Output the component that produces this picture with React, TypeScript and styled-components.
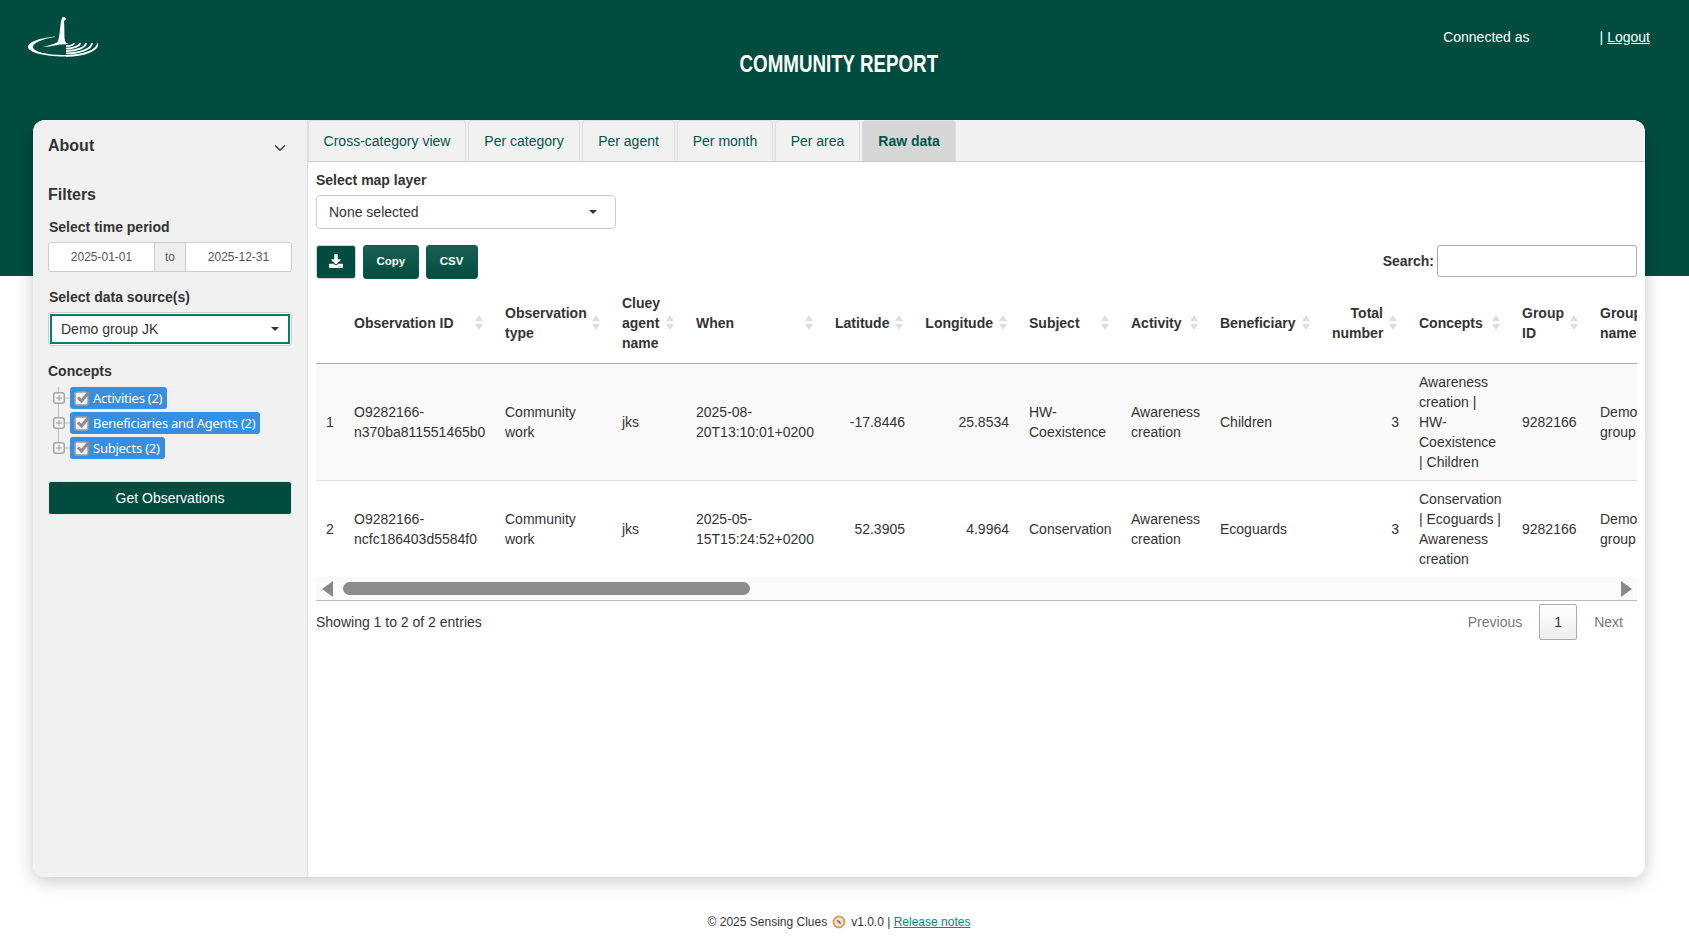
import React from "react";
import styled, { createGlobalStyle } from "styled-components";
import { ChevronDown } from "lucide-react";
import { FaDownload } from "react-icons/fa";

const GREEN = "#004d40";

const Global = createGlobalStyle`
  html, body { margin: 0; padding: 0; background: #fff; }
  body { font-family: "Liberation Sans", Arial, sans-serif; font-size: 14px; color: #333; line-height: 20px; overflow: hidden; }
  * { box-sizing: border-box; }
`;

const Top = styled.header`
  height: 276px;
  background: ${GREEN};
  padding: 17px 39px 0 28px;
  display: grid;
  grid-template-columns: 1fr auto 1fr;
  align-items: start;
  color: #fff;
`;
const Logo = styled.svg`
  width: 70px;
  height: 40px;
  display: block;
`;
const Title = styled.h1`
  margin: 34px 0 0;
  font-size: 23px;
  line-height: 26px;
  font-weight: 700;
  white-space: nowrap;
  transform: scaleX(0.815);
`;
const User = styled.div`
  margin-top: 10px;
  justify-self: end;
  display: flex;
  gap: 4px;
`;
const Who = styled.span`
  margin-right: 66px;
`;
const Logout = styled.a`
  color: #fff;
  text-decoration: underline;
`;

const Card = styled.main`
  display: flex;
  height: 757px;
  margin: -156px 44px 0 33px;
  background: #fff;
  border-radius: 12px;
  box-shadow: 0 4px 18px rgba(0, 0, 0, 0.22);
  overflow: hidden;
`;

const Side = styled.aside`
  width: 275px;
  flex: none;
  background: #f1f1f1;
  border-right: 1px solid #ddd;
  padding: 16px 15px 0 15px;
  display: flex;
  flex-direction: column;
`;
const SideHead = styled.div`
  display: flex;
  justify-content: space-between;
  align-items: center;
  font-size: 16px;
  font-weight: 700;
  height: 20px;
  color: #333;
  svg { margin: 3px 3px 0 0; color: #444; }
`;
const FilterTitle = styled.div`
  font-size: 16px;
  font-weight: 700;
  margin-top: 29px;
  height: 20px;
`;
const FieldLabel = styled.label<{ $top: number; $bottom?: number; $indent?: boolean }>`
  display: block;
  font-weight: 700;
  height: 20px;
  margin: ${(p) => p.$top}px 0 ${(p) => p.$bottom ?? 5}px;
  padding-left: ${(p) => (p.$indent ? 1 : 0)}px;
`;
const DateRange = styled.div`
  display: flex;
  width: 244px;
  height: 30px;
  border: 1px solid #ccc;
  border-radius: 3px;
  background: #fff;
  font-size: 12px;
  color: #555;
`;
const DateCell = styled.div`
  flex: 1;
  display: flex;
  align-items: center;
  justify-content: center;
`;
const DateTo = styled.div`
  width: 32px;
  display: flex;
  align-items: center;
  justify-content: center;
  background: #eee;
  border-left: 1px solid #ccc;
  border-right: 1px solid #ccc;
`;
const SourceFrame = styled.div`
  width: 244px;
  height: 34px;
  padding: 1px;
  border: 1px solid #ccc;
  border-radius: 4px;
  background: #fff;
`;
const SourceInner = styled.div`
  height: 100%;
  border: 2px solid #00806f;
  background: #fff;
  padding-left: 9px;
  padding-right: 9px;
  display: flex;
  align-items: center;
  justify-content: space-between;
`;
const Caret = styled.span`
  width: 0;
  height: 0;
  border-left: 4.5px solid transparent;
  border-right: 4.5px solid transparent;
  border-top: 4.5px solid #333;
`;
const Tree = styled.ul`
  list-style: none;
  margin: 0;
  padding: 0 0 0 5px;
  display: flex;
  flex-direction: column;
  gap: 3px;
  background: linear-gradient(#bbb, #bbb) 10px 0 / 1px 64px no-repeat;
`;
const TreeRow = styled.li`
  display: flex;
  align-items: center;
  height: 22px;
`;
const Expander = styled.svg`
  width: 17px;
  height: 12px;
  flex: none;
`;
const Node = styled.span`
  display: inline-flex;
  align-items: center;
  gap: 2px;
  height: 22px;
  padding: 0 5px 0 4px;
  background: #378fe2;
  border-radius: 3px;
  color: #fff;
  font-family: "Noto Sans", sans-serif;
  font-size: 13px;
  letter-spacing: -0.25px;
  white-space: nowrap;
`;
const Check = styled.svg`
  width: 17px;
  height: 17px;
  flex: none;
  margin-top: -2px;
`;
const GetButton = styled.button`
  width: 244px;
  height: 34px;
  margin-top: 22px;
  border: 1px solid #e8e8e8;
  border-radius: 3px;
  background: ${GREEN};
  color: #fff;
  font: 14px "Liberation Sans", Arial, sans-serif;
`;

const Content = styled.section`
  flex: 1;
  min-width: 0;
  display: flex;
  flex-direction: column;
`;
const TabBar = styled.nav`
  display: flex;
  gap: 2px;
  height: 42px;
  flex: none;
  background: #f1f1f1;
  border-bottom: 1px solid #ccc;
`;
const Tab = styled.a<{ $w: number; $on?: boolean }>`
  width: ${(p) => p.$w}px;
  height: 41px;
  display: flex;
  align-items: center;
  justify-content: center;
  border: 1px solid #ddd;
  border-bottom: 0;
  border-radius: 4px 4px 0 0;
  color: #00574a;
  background: ${(p) => (p.$on ? "#d6d6d6" : "#f1f1f1")};
  font-weight: ${(p) => (p.$on ? 700 : 400)};
`;
const Panel = styled.div`
  padding: 8px 8px 0 8px;
  flex: 1;
  min-height: 0;
`;
const MapLabel = styled.label`
  display: block;
  font-weight: 700;
  height: 20px;
  margin-bottom: 5px;
`;
const LayerSelect = styled.div`
  width: 300px;
  height: 34px;
  display: flex;
  align-items: center;
  justify-content: space-between;
  padding: 0 18px 0 12px;
  border: 1px solid #ccc;
  border-radius: 4px;
  background: #fff;
`;
const Toolbar = styled.div`
  display: flex;
  align-items: center;
  margin-top: 16px;
  height: 34px;
`;
const ToolButton = styled.button<{ $w: number; $icon?: boolean }>`
  width: ${(p) => p.$w}px;
  height: 34px;
  margin-right: 7px;
  display: flex;
  align-items: center;
  justify-content: center;
  padding: 0 0 2px;
  border: 1px solid ${(p) => (p.$icon ? "#d0d0d0" : "#0d5a4d")};
  border-radius: 3px;
  background: ${(p) => (p.$icon ? GREEN : "linear-gradient(#1a6052, #004d40)")};
  color: #fff;
  font: 700 11.5px "Liberation Sans", Arial, sans-serif;
`;
const SearchLabel = styled.label`
  margin-left: auto;
  font-weight: 700;
  margin-right: 3px;
  margin-top: -2px;
`;
const SearchBox = styled.div`
  width: 200px;
  height: 32px;
  margin-bottom: 2px;
  border: 1px solid #aaa;
  border-radius: 3px;
  background: #fff;
`;

const TableClip = styled.div`
  margin-top: 4px;
  overflow: hidden;
`;
const Table = styled.table`
  table-layout: fixed;
  border-collapse: collapse;
  width: 1441px;
`;
const Th = styled.th<{ $right?: boolean; $sort?: boolean }>`
  position: relative;
  padding: 10px ${(p) => (p.$sort ? "26px" : "10px")} 10px 10px;
  height: 80px;
  text-align: ${(p) => (p.$right ? "right" : "left")};
  white-space: pre;
  font-weight: 700;
  border-bottom: 1px solid #aaa;
  overflow: hidden;
  &::before, &::after {
    content: ${(p) => (p.$sort ? '""' : "none")};
    position: absolute;
    right: 12px;
    width: 0;
    height: 0;
    border-left: 4px solid transparent;
    border-right: 4px solid transparent;
  }
  &::before { top: calc(50% - 8px); border-bottom: 6px solid #ddd; }
  &::after { top: calc(50% + 1px); border-top: 6px solid #ddd; }
`;
const Tr = styled.tr<{ $odd?: boolean; $line?: boolean }>`
  background: ${(p) => (p.$odd ? "#f9f9f9" : "#fff")};
  border-bottom: ${(p) => (p.$line ? "1px solid #ddd" : "0")};
`;
const Td = styled.td<{ $align: string; $num?: boolean }>`
  padding: ${(p) => (p.$num ? "8px 0" : "8px 10px")};
  text-align: ${(p) => p.$align};
  white-space: pre;
  vertical-align: middle;
  overflow: hidden;
`;
const Scroller = styled.div`
  height: 24px;
  display: flex;
  align-items: center;
  background: #fafafa;
  border-bottom: 1px solid #bbb;
  padding: 0 5px 0 6px;
`;
const ArrowLeft = styled.span`
  width: 0;
  height: 0;
  border-top: 8px solid transparent;
  border-bottom: 8px solid transparent;
  border-right: 11px solid #888;
`;
const ArrowRight = styled.span`
  width: 0;
  height: 0;
  margin-left: auto;
  border-top: 8px solid transparent;
  border-bottom: 8px solid transparent;
  border-left: 11px solid #888;
`;
const Thumb = styled.span`
  width: 407px;
  height: 13px;
  margin-left: 10px;
  border-radius: 7px;
  background: #8c8c8c;
`;
const Foot = styled.div`
  display: flex;
  align-items: center;
  justify-content: space-between;
  margin-top: 3px;
  height: 36px;
  padding-right: 14px;
`;
const Pager = styled.div`
  display: flex;
  align-items: center;
  gap: 17px;
  color: #777;
`;
const PageNum = styled.span`
  width: 38px;
  height: 36px;
  display: flex;
  align-items: center;
  justify-content: center;
  border: 1px solid #aaa;
  border-radius: 2px;
  color: #333;
  background: linear-gradient(#fff, #eee);
`;

const Bottom = styled.footer`
  display: flex;
  justify-content: center;
  align-items: center;
  padding: 29px 11px 0 0;
  font-size: 12px;
  color: #333;
  height: 60px;
  white-space: pre;
`;
const Release = styled.a`
  color: #00897b;
  text-decoration: underline;
`;
const Compass = styled.svg`
  width: 14px;
  height: 14px;
  margin: 0 5px;
`;

const tabs: [string, number, boolean?][] = [
  ["Cross-category view", 158],
  ["Per category", 112],
  ["Per agent", 93],
  ["Per month", 96],
  ["Per area", 85],
  ["Raw data", 94, true],
];

const columns: { title: string; width: number; right?: boolean; sort?: boolean }[] = [
  { title: "", width: 28 },
  { title: "Observation ID", width: 151, sort: true },
  { title: "Observation\ntype", width: 117, sort: true },
  { title: "Cluey\nagent\nname", width: 74, sort: true },
  { title: "When", width: 139, sort: true },
  { title: "Latitude", width: 90, right: true, sort: true },
  { title: "Longitude", width: 104, right: true, sort: true },
  { title: "Subject", width: 102, sort: true },
  { title: "Activity", width: 89, sort: true },
  { title: "Beneficiary", width: 112, sort: true },
  { title: "Total\nnumber", width: 87, right: true, sort: true },
  { title: "Concepts", width: 103, sort: true },
  { title: "Group\nID", width: 78, sort: true },
  { title: "Group\nname", width: 167, sort: true },
];

const rows: string[][] = [
  ["1", "O9282166-\nn370ba811551465b0", "Community\nwork", "jks", "2025-08-\n20T13:10:01+0200", "-17.8446", "25.8534", "HW-\nCoexistence", "Awareness\ncreation", "Children", "3", "Awareness\ncreation |\nHW-\nCoexistence\n| Children", "9282166", "Demo\ngroup JK"],
  ["2", "O9282166-\nncfc186403d5584f0", "Community\nwork", "jks", "2025-05-\n15T15:24:52+0200", "52.3905", "4.9964", "Conservation", "Awareness\ncreation", "Ecoguards", "3", "Conservation\n| Ecoguards |\nAwareness\ncreation", "9282166", "Demo\ngroup JK"],
];

const concepts = ["Activities (2)", "Beneficiaries and Agents (2)", "Subjects (2)"];

const ripples = [8, 14, 20, 26, 32];

export default function App() {
  return (
    <>
      <Global />
      <Top>
        <Logo viewBox="0 0 70 40" aria-label="Sensing Clues">
          <path fill="#fff" d="M34.5 0C36.5-.3 38 1 38 2.2L36 4C36.6 10 36.2 17 36.6 22C37 25 38.5 26.5 41 27L33 27.5C30 27.5 24 29.5 15 30C22 28 27 27 29.5 25C32 20 32 10 33 4Z" />
          <path fill="#fff" d="M27 19.5C10 21 0 25.5 0 30C0 35 16 39.5 36 39.5C44 39.5 50 38.5 56 36.5C48 38 42 38 36 38C20 38 5 35 5 30C5 26 14 22 27 20Z" />
          {ripples.map((r) => (
            <path key={r} fill="none" stroke="#fff" strokeWidth="1.8" d={`M${38 + r} 26A${r} ${r * 0.4} 0 0 1 38 ${26 + r * 0.4}`} />
          ))}
        </Logo>
        <Title>COMMUNITY REPORT</Title>
        <User>
          <Who>Connected as</Who>
          <span>|</span>
          <Logout>Logout</Logout>
        </User>
      </Top>
      <Card>
        <Side>
          <SideHead>
            About
            <ChevronDown size={18} strokeWidth={2} />
          </SideHead>
          <FilterTitle>Filters</FilterTitle>
          <FieldLabel $top={12} $indent>Select time period</FieldLabel>
          <DateRange>
            <DateCell>2025-01-01</DateCell>
            <DateTo>to</DateTo>
            <DateCell>2025-12-31</DateCell>
          </DateRange>
          <FieldLabel $top={15} $indent>Select data source(s)</FieldLabel>
          <SourceFrame>
            <SourceInner>
              Demo group JK
              <Caret />
            </SourceInner>
          </SourceFrame>
          <FieldLabel $top={15} $bottom={6}>Concepts</FieldLabel>
          <Tree>
            {concepts.map((c) => (
              <TreeRow key={c}>
                <Expander viewBox="0 0 17 12">
                  <rect x="0.75" y="0.75" width="10.5" height="10.5" rx="2" fill="#f4f4f4" stroke="#a5a5a5" strokeWidth="1.5" />
                  <path d="M3 6H9M6 3V9" stroke="#999" strokeWidth="1" fill="none" />
                  <path d="M12 6H17" stroke="#bbb" strokeWidth="1" />
                </Expander>
                <Node>
                  <Check viewBox="0 0 17 17">
                    <rect x="1" y="3" width="13" height="13" rx="2" fill="#f3f3f3" stroke="#a0a0a0" strokeWidth="1.5" />
                    <path d="M4 8.5L7.5 12L15 3" fill="none" stroke="#8c8c8c" strokeWidth="3" />
                  </Check>
                  {c}
                </Node>
              </TreeRow>
            ))}
          </Tree>
          <GetButton>Get Observations</GetButton>
        </Side>
        <Content>
          <TabBar>
            {tabs.map(([label, w, on]) => (
              <Tab key={label} $w={w} $on={on}>
                {label}
              </Tab>
            ))}
          </TabBar>
          <Panel>
            <MapLabel>Select map layer</MapLabel>
            <LayerSelect>
              None selected
              <Caret />
            </LayerSelect>
            <Toolbar>
              <ToolButton $w={40} $icon aria-label="Download">
                <FaDownload size={14} />
              </ToolButton>
              <ToolButton $w={55.5}>Copy</ToolButton>
              <ToolButton $w={52}>CSV</ToolButton>
              <SearchLabel>Search:</SearchLabel>
              <SearchBox />
            </Toolbar>
            <TableClip>
              <Table>
                <colgroup>
                  {columns.map((c, i) => (
                    <col key={i} width={c.width} />
                  ))}
                </colgroup>
                <thead>
                  <tr>
                    {columns.map((c, i) => (
                      <Th key={i} $right={c.right} $sort={c.sort}>
                        {c.title}
                      </Th>
                    ))}
                  </tr>
                </thead>
                <tbody>
                  {rows.map((r, ri) => (
                    <Tr key={ri} $odd={ri === 0} $line={ri === 0}>
                      {r.map((v, i) => (
                        <Td key={i} $align={i === 0 ? "center" : columns[i].right ? "right" : "left"} $num={i === 0}>
                          {v}
                        </Td>
                      ))}
                    </Tr>
                  ))}
                </tbody>
              </Table>
            </TableClip>
            <Scroller>
              <ArrowLeft />
              <Thumb />
              <ArrowRight />
            </Scroller>
            <Foot>
              <span>Showing 1 to 2 of 2 entries</span>
              <Pager>
                <span>Previous</span>
                <PageNum>1</PageNum>
                <span>Next</span>
              </Pager>
            </Foot>
          </Panel>
        </Content>
      </Card>
      <Bottom>
        © 2025 Sensing Clues
        <Compass viewBox="0 0 14 14">
          <circle cx="7" cy="7" r="5.5" fill="#e8e4e0" stroke="#e0a050" strokeWidth="2" />
          <path d="M4.5 4.5L8 6L9.5 9.5L6 8Z" fill="#b06a70" />
        </Compass>
        {"v1.0.0 | "}
        <Release>Release notes</Release>
      </Bottom>
    </>
  );
}
